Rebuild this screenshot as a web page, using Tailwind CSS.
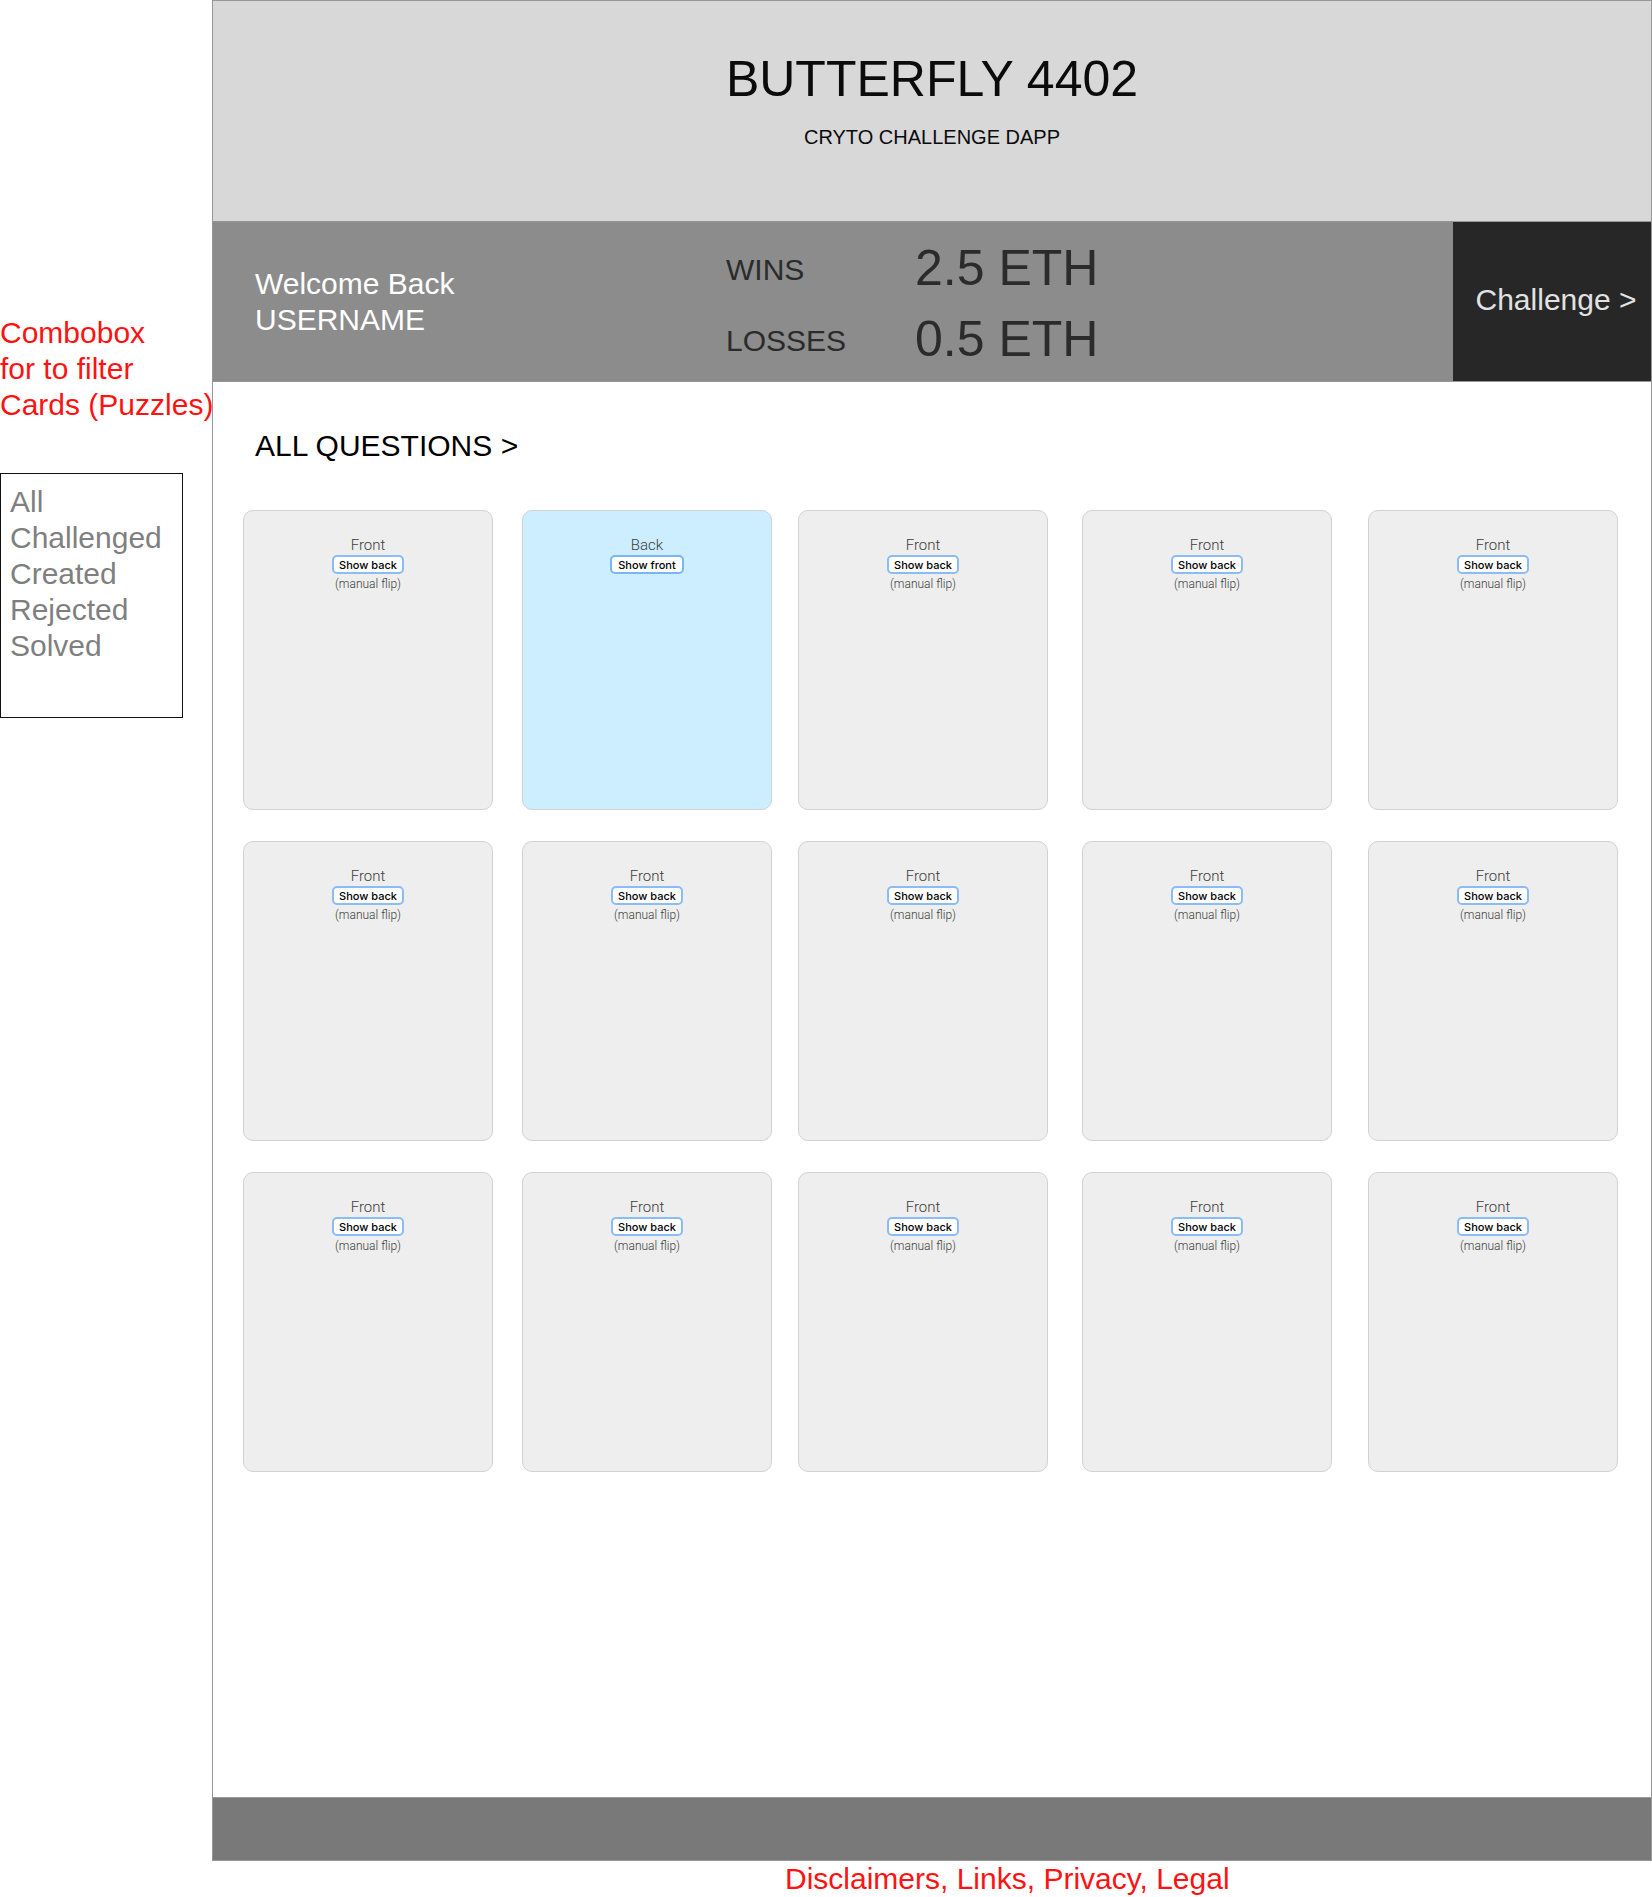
<!DOCTYPE html>
<html lang="en">
<head>
<meta charset="utf-8">
<meta name="viewport" content="width=device-width, initial-scale=1">
<title>Butterfly 4402</title>
<script src="https://cdn.jsdelivr.net/npm/@tailwindcss/browser@4"></script>
</head>
<body class="bg-white font-['Liberation_Sans',Arial,sans-serif] text-[30px] leading-[36px] text-black">
<div class="flex min-h-screen">

  <!-- Card filter -->
  <aside class="w-[212px] shrink-0 pt-[315px]">
    <label for="filter" class="block whitespace-nowrap text-[#ff1212]">Combobox<br>for to filter<br>Cards (Puzzles)</label>
    <select id="filter" size="5" class="mt-[50px] block h-[245px] w-[183px] appearance-none overflow-hidden rounded-none border border-[#111111] bg-white px-[9px] py-[11px] text-[#7f7f7f] outline-none">
      <option class="block h-[36px] p-0 leading-[36px]">All</option>
      <option class="block h-[36px] p-0 leading-[36px]">Challenged</option>
      <option class="block h-[36px] p-0 leading-[36px]">Created</option>
      <option class="block h-[36px] p-0 leading-[36px]">Rejected</option>
      <option class="block h-[36px] p-0 leading-[36px]">Solved</option>
    </select>
  </aside>

  <div class="flex min-w-0 flex-1 flex-col">
    <div class="flex flex-1 flex-col border border-[#979797]">

      <header class="h-[221px] border-b border-[#979797] bg-[#d8d8d8] pt-12 text-center text-[#0b0b0b]">
        <h1 class="text-[50px] leading-[60px]">BUTTERFLY 4402</h1>
        <p class="mt-4 text-[20px] leading-[24px]">CRYTO CHALLENGE DAPP</p>
      </header>

      <!-- Player summary -->
      <section class="grid h-[160px] grid-cols-[513fr_727fr_198px] border-b border-[#979797] bg-[#8c8c8c]">
        <p class="self-center pl-[42px] text-white">Welcome Back<br>USERNAME</p>
        <dl class="grid grid-cols-[189px_auto] content-start items-center justify-start gap-y-[11px] pt-4 text-[#2b2b2b]">
          <dt class="pt-1">WINS</dt>
          <dd class="text-[50px] leading-[60px]">2.5 ETH</dd>
          <dt class="pt-1">LOSSES</dt>
          <dd class="text-[50px] leading-[60px]">0.5 ETH</dd>
        </dl>
        <button type="button" class="bg-[#272727] pr-3 pb-1 pl-5 text-center whitespace-nowrap text-[#e2e2e2]">Challenge &gt;</button>
      </section>

      <main class="flex-1 pt-[46px] pr-[33px] pb-12 pl-[30px]">
        <h2 class="pl-3"><a href="#questions">ALL QUESTIONS &gt;</a></h2>
        <div id="questions" class="mt-[46px] grid grid-cols-[279fr_276fr_284fr_286fr_250fr] gap-y-[31px]"></div>
      </main>

      <footer class="h-[63px] border-t border-[#979797] bg-[#797979]"></footer>
    </div>
    <p class="pl-[573px] whitespace-nowrap text-[#ff1212]">Disclaimers, Links, Privacy, Legal</p>
  </div>
</div>

<template id="front">
  <article class="flex h-[300px] w-[250px] max-w-full flex-col items-center rounded-[10px] border border-[#d2d2d2] bg-[#eeeeee] pt-[25px] text-[#3c3c3c]">
    <p class="font-[Roboto] text-[15px] leading-[19px] font-light">Front</p>
    <button type="button" class="h-[19px] w-[72px] rounded-[5px] border-2 border-[#8abcf5] bg-white font-[Inter] text-[11px] leading-[14px] font-medium whitespace-nowrap text-black">Show back</button>
    <p class="font-[Roboto] text-[12px] leading-[21px] font-light">(manual flip)</p>
  </article>
</template>
<template id="back">
  <article class="flex h-[300px] w-[250px] max-w-full flex-col items-center rounded-[10px] border border-[#d2d2d2] bg-[#cceeff] pt-[25px] text-[#3c3c3c]">
    <p class="font-[Roboto] text-[15px] leading-[19px] font-light">Back</p>
    <button type="button" class="h-[19px] w-[74px] rounded-[5px] border-2 border-[#78b5fa] bg-white font-[Inter] text-[11px] leading-[14px] font-medium whitespace-nowrap text-black">Show front</button>
  </article>
</template>

<script>
  const makeCard = (side) => {
    const card = document.getElementById(side).content.cloneNode(true).firstElementChild;
    const other = side === 'front' ? 'back' : 'front';
    card.querySelector('button').addEventListener('click', () => card.replaceWith(makeCard(other)));
    return card;
  };
  const grid = document.getElementById('questions');
  for (let i = 0; i < 15; i++) grid.append(makeCard(i === 1 ? 'back' : 'front'));
</script>
</body>
</html>
